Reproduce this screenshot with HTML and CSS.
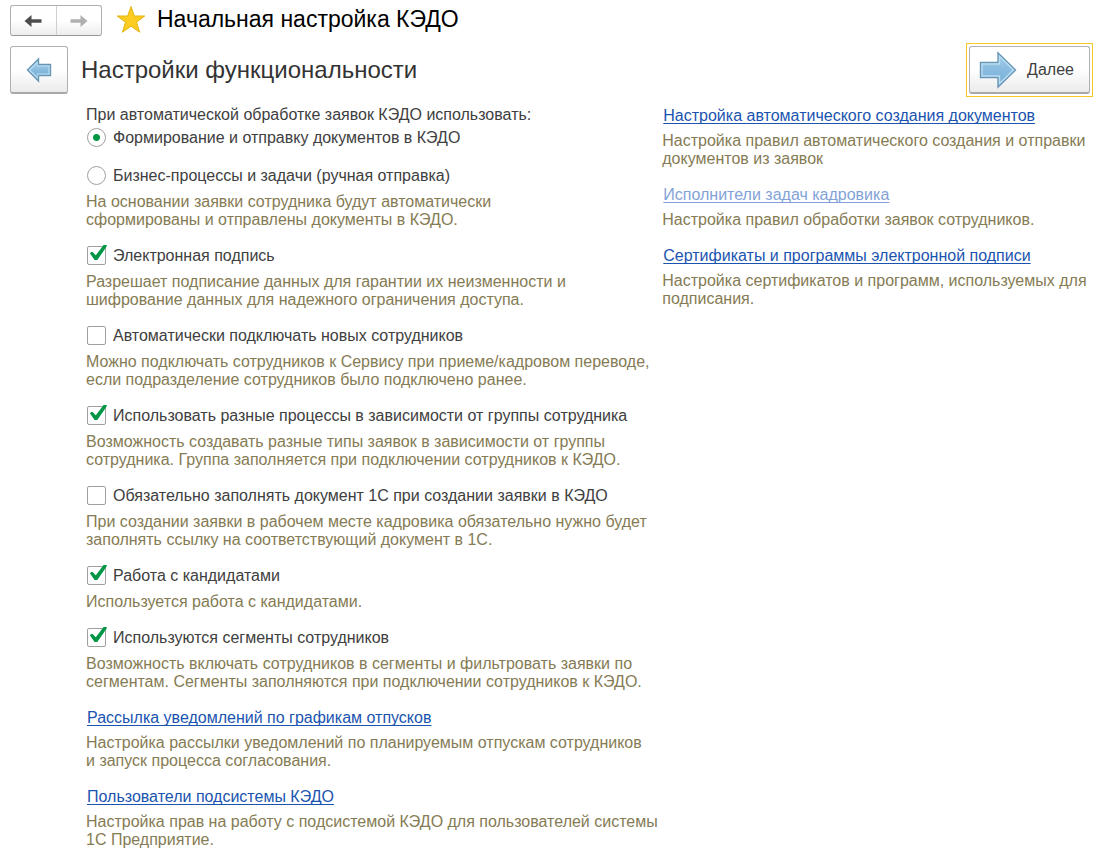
FILE: index.html
```html
<!DOCTYPE html>
<html lang="ru">
<head>
<meta charset="utf-8">
<title>Начальная настройка КЭДО</title>
<link rel="stylesheet" href="styles.css">
</head>
<body>
<header class="titlebar">
  <div class="history">
    <button class="history-btn" type="button" aria-label="Назад">
      <svg width="18" height="14" viewBox="0 0 18 14"><path d="M0.500 7 7.500 1V5.200H17.500V8.800H7.500V13Z" fill="#4d4d4d"/></svg>
    </button>
    <button class="history-btn" type="button" aria-label="Вперед" disabled>
      <svg width="18" height="14" viewBox="0 0 18 14"><path d="M17.500 7 10.500 1V5.200H0.500V8.800H10.500V13Z" fill="#b0b0b0"/></svg>
    </button>
  </div>
  <button class="favorite" type="button" aria-label="Избранное">
    <svg width="30" height="28" viewBox="0 0 30 28"><path d="M15 1.500 18.300 11H28.800L20.500 17.200 23.600 27.200 15 21.200 6.400 27.200 9.500 17.200 1.200 11H11.700Z" fill="#fccc21" stroke="#e3b414" stroke-width="1"/></svg>
  </button>
  <h1 class="window-title">Начальная настройка КЭДО</h1>
</header>

<div class="stepbar">
  <button class="push back" type="button" aria-label="Предыдущий шаг">
    <svg width="26" height="26" viewBox="0 0 26 26">
      <defs><linearGradient id="blue-back" x1="0" y1="0" x2="0" y2="1"><stop offset="0" stop-color="#9fcbe8"/><stop offset="1" stop-color="#72acd4"/></linearGradient></defs>
      <path d="M1.500 13 12.500 2V7.500H24.500V18.500H12.500V24Z" fill="#b9dcf0" stroke="#6795b4" stroke-width="1.400"/>
      <path d="M4.500 13 11 6.500V9.500H22.500V16.500H11V19.500Z" fill="url(#blue-back)"/>
    </svg>
  </button>
  <h2 class="step-title">Настройки функциональности</h2>
  <div class="focus-frame">
    <button class="push next" type="button">
      <svg width="38" height="38" viewBox="0 0 38 38">
        <defs><linearGradient id="blue-next" x1="0" y1="0" x2="0" y2="1"><stop offset="0" stop-color="#a0cbe9"/><stop offset="1" stop-color="#73acd6"/></linearGradient></defs>
        <path d="M1.500 11.500H19V2L36.500 19 19 36V26.500H1.500Z" fill="url(#blue-next)" stroke="#6795b4" stroke-width="1.400"/>
        <path d="M3 13H20.500V5.500L34.500 19 20.500 32.500V25H3Z" fill="none" stroke="#b9dcf0" stroke-width="1.400"/>
      </svg>
      <span>Далее</span>
    </button>
  </div>
</div>

<main class="columns">
  <form class="column">
    <fieldset class="mode">
      <legend class="mode-title">При автоматической обработке заявок КЭДО использовать:</legend>
      <label class="option"><input class="radio" type="radio" name="mode" checked>Формирование и отправку документов в КЭДО</label>
      <label class="option spaced"><input class="radio" type="radio" name="mode">Бизнес-процессы и задачи (ручная отправка)</label>
      <p class="hint">На основании заявки сотрудника будут автоматически<br>сформированы и отправлены документы в КЭДО.</p>
    </fieldset>
    <section>
      <label class="option"><input class="check" type="checkbox" checked>Электронная подпись</label>
      <p class="hint">Разрешает подписание данных для гарантии их неизменности и<br>шифрование данных для надежного ограничения доступа.</p>
    </section>
    <section>
      <label class="option"><input class="check" type="checkbox">Автоматически подключать новых сотрудников</label>
      <p class="hint">Можно подключать сотрудников к Сервису при приеме/кадровом переводе,<br>если подразделение сотрудников было подключено ранее.</p>
    </section>
    <section>
      <label class="option"><input class="check" type="checkbox" checked>Использовать разные процессы в зависимости от группы сотрудника</label>
      <p class="hint">Возможность создавать разные типы заявок в зависимости от группы<br>сотрудника. Группа заполняется при подключении сотрудников к КЭДО.</p>
    </section>
    <section>
      <label class="option"><input class="check" type="checkbox">Обязательно заполнять документ 1С при создании заявки в КЭДО</label>
      <p class="hint">При создании заявки в рабочем месте кадровика обязательно нужно будет<br>заполнять ссылку на соответствующий документ в 1С.</p>
    </section>
    <section>
      <label class="option"><input class="check" type="checkbox" checked>Работа с кандидатами</label>
      <p class="hint">Используется работа с кандидатами.</p>
    </section>
    <section>
      <label class="option"><input class="check" type="checkbox" checked>Используются сегменты сотрудников</label>
      <p class="hint">Возможность включать сотрудников в сегменты и фильтровать заявки по<br>сегментам. Сегменты заполняются при подключении сотрудников к КЭДО.</p>
    </section>
    <section>
      <a class="link" href="#">Рассылка уведомлений по графикам отпусков</a>
      <p class="hint link-hint">Настройка рассылки уведомлений по планируемым отпускам сотрудников<br>и запуск процесса согласования.</p>
    </section>
    <section>
      <a class="link" href="#">Пользователи подсистемы КЭДО</a>
      <p class="hint link-hint">Настройка прав на работу с подсистемой КЭДО для пользователей системы<br>1С Предприятие.</p>
    </section>
  </form>

  <div class="column">
    <section>
      <a class="link" href="#">Настройка автоматического создания документов</a>
      <p class="hint link-hint">Настройка правил автоматического создания и отправки<br>документов из заявок</p>
    </section>
    <section>
      <a class="link muted" href="#" aria-disabled="true">Исполнители задач кадровика</a>
      <p class="hint link-hint">Настройка правил обработки заявок сотрудников.</p>
    </section>
    <section>
      <a class="link" href="#">Сертификаты и программы электронной подписи</a>
      <p class="hint link-hint">Настройка сертификатов и программ, используемых для<br>подписания.</p>
    </section>
  </div>
</main>
</body>
</html>
```
FILE: styles.css
```css
* { box-sizing: border-box; }

body {
  margin: 0;
  padding: 5px 10px 12px;
  background: #fff;
  color: #404040;
  font: 16px/18px "Liberation Sans", Arial, sans-serif;
}

h1, h2, p { margin: 0; font-weight: normal; }
button { font: inherit; color: inherit; padding: 0; }
svg { display: block; }

.titlebar { display: flex; align-items: flex-start; }

.history {
  display: flex;
  width: 92px;
  height: 31px;
  border: 1px solid #b0b0b0;
  border-bottom-color: #989898;
  border-radius: 3px;
  background: linear-gradient(#fff 50%, #ededed);
}

.history-btn {
  flex: 1;
  display: flex;
  align-items: center;
  justify-content: center;
  border: 0;
  background: none;
}

.history-btn + .history-btn { border-left: 1px solid #d0d0d0; }

.favorite { margin: 0 11px 0 14px; border: 0; background: none; }

.window-title { font-size: 23px; line-height: 28px; color: #000; }

.stepbar { display: flex; align-items: center; margin-top: 7px; }

.push {
  display: flex;
  align-items: center;
  justify-content: center;
  height: 48px;
  border: 1px solid #b0b0b0;
  border-bottom: 2px solid #a8a8a8;
  border-radius: 3px;
  background: linear-gradient(#fff 50%, #ebebeb);
}

.back { width: 58px; }

.step-title {
  flex: 1;
  margin-left: 13px;
  font-size: 24px;
  line-height: 30px;
  color: #333;
}

.focus-frame { padding: 2px; border: 1px solid #f5c827; }

.next { width: 121px; gap: 10px; padding-right: 6px; }

.columns {
  display: grid;
  grid-template-columns: 4fr 3fr;
  gap: 2px;
  padding: 9px 0 0 76px;
}

.column { display: flex; flex-direction: column; gap: 17px; }

.mode { margin: 0; padding: 0; border: 0; min-width: 0; }
.mode-title { padding: 0; margin-bottom: 4px; }

.option { display: flex; align-items: center; height: 20px; gap: 7px; }
.spaced { margin-top: 18px; }

.hint { margin-top: 7px; color: #857b54; white-space: nowrap; }
.link-hint { margin-top: 6px; }

.radio, .check {
  appearance: none;
  flex: none;
  align-self: flex-start;
  width: 19px;
  height: 19px;
  margin: 0 0 0 1px;
  border: 1px solid #a0a0a0;
  background: #fff;
}

.radio { border-radius: 50%; }
.radio:checked { background: radial-gradient(circle, #009646 3px, #fff 4px); }

.check { position: relative; border-radius: 2px; }

.check:checked::after {
  content: "";
  position: absolute;
  top: -2px;
  left: 2px;
  width: 17px;
  height: 16px;
  background: #009646;
  clip-path: polygon(0 53%, 6% 44%, 15% 44%, 34% 64%, 80% 0, 98% 0, 98% 10%, 43% 94%, 27% 94%);
}

.link {
  display: block;
  width: fit-content;
  margin-left: 1px;
  line-height: 20px;
  color: #1a54b0;
  text-decoration: underline 1px;
  text-decoration-skip-ink: none;
  text-underline-offset: 2px;
}

.muted { color: #83a3d8; }
```
